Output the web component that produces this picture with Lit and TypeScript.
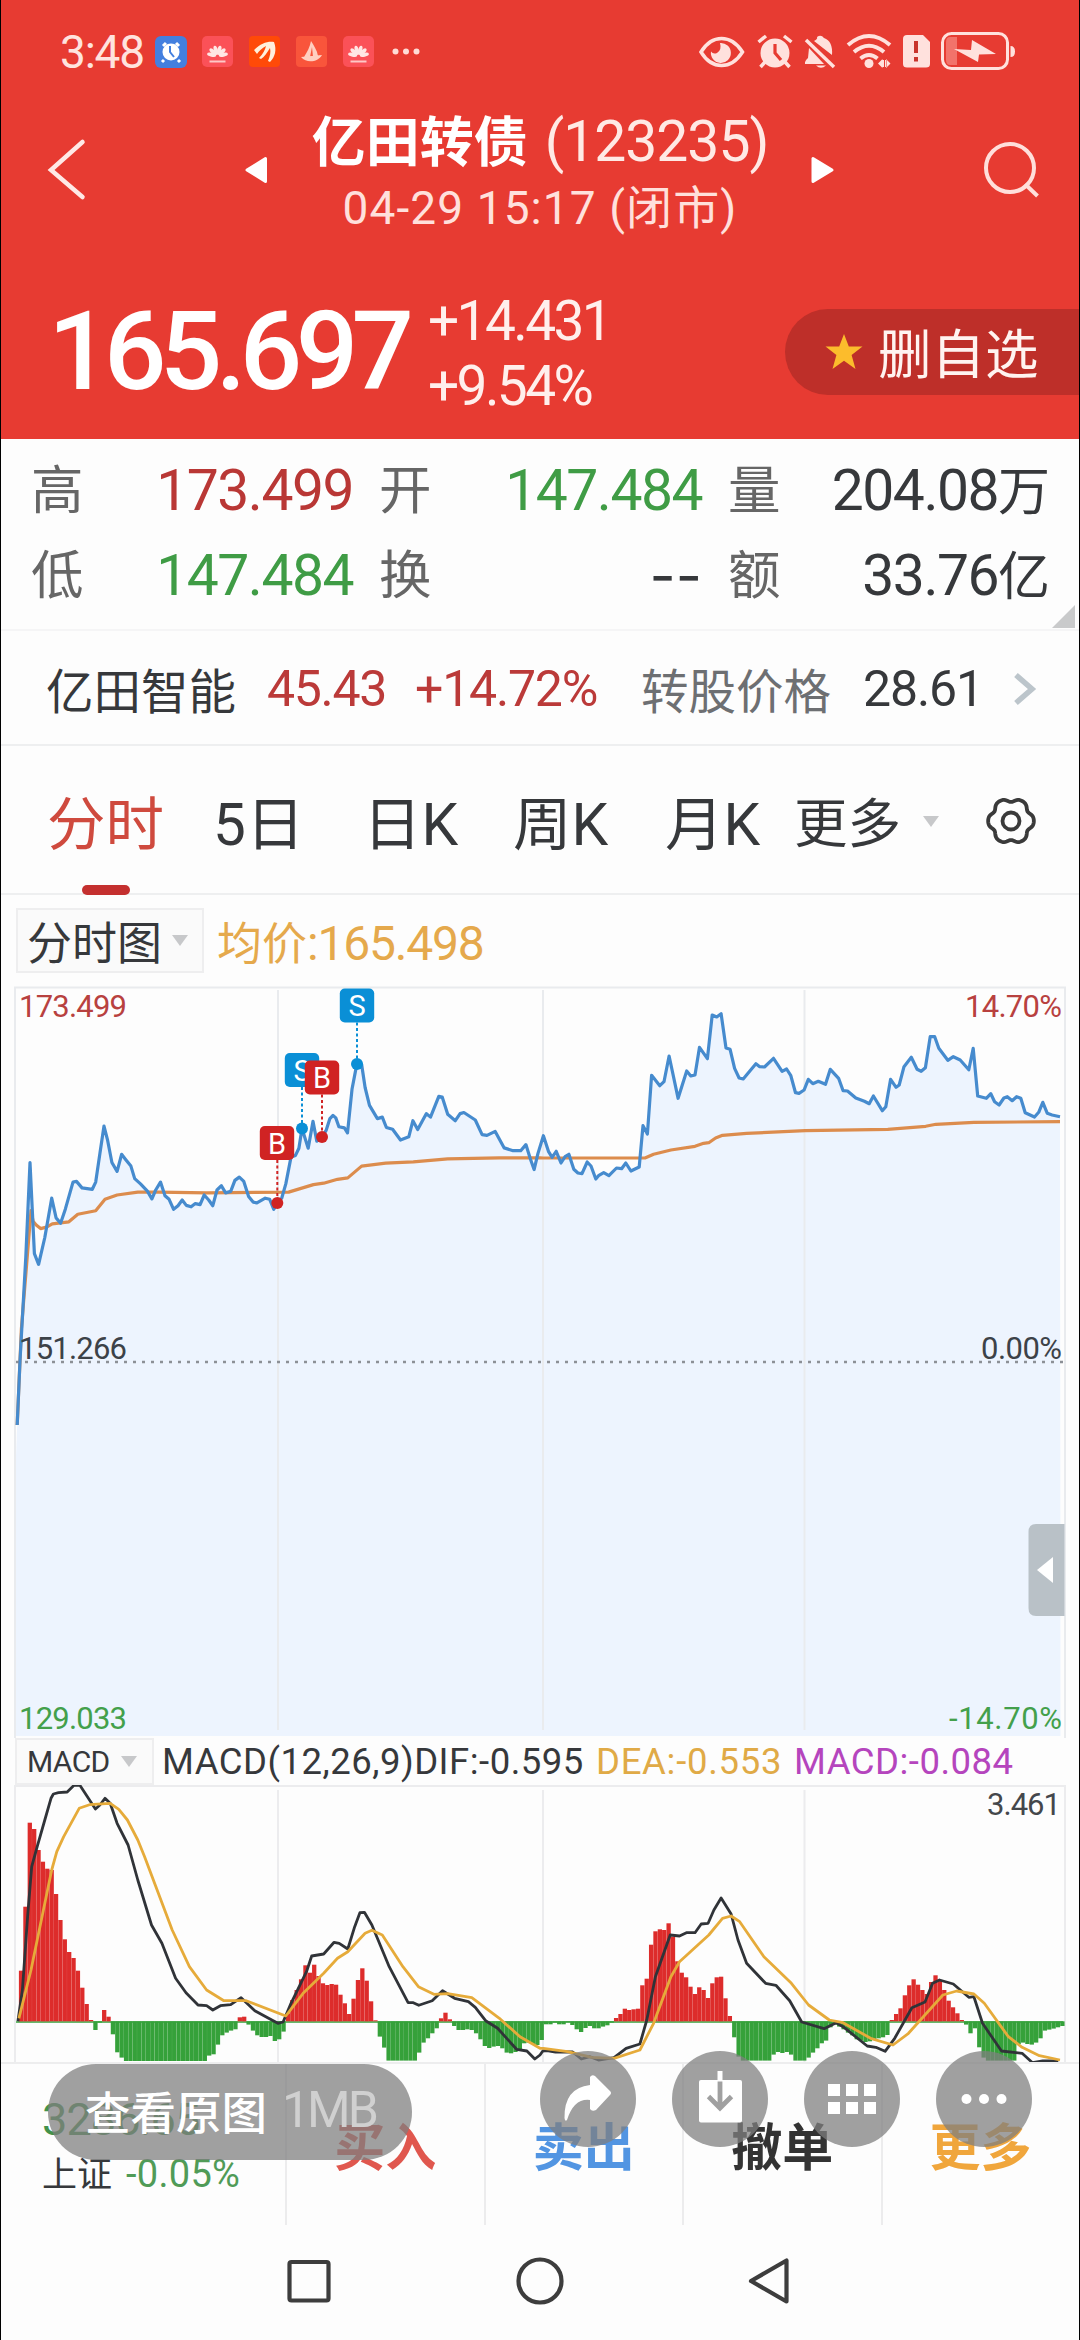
import { LitElement, html, svg, css } from "lit";
import { customElement, property } from "lit/decorators.js";

type Pt = [number, number];

/** Parses "x,y x,y ..." samples and maps them from their grid to page pixels. */
const series = (src: string, ox: number, oy: number, sx: number, sy: number): Pt[] =>
  src.trim().split(/\s+/).map((p) => {
    const [x, y] = p.split(",").map(Number);
    return [ox + x / sx, oy + y / sy] as Pt;
  });

const line = (pts: Pt[]) => pts.map(([x, y], i) => `${i ? "L" : "M"}${x.toFixed(1)} ${y.toFixed(1)}`).join("");

const GX = 2.9037;

const PRICE: Pt[] = [
  ...series(
    `50,1470 58,1290 75,1000 87,735 100,990 112,1020 130,945 150,835 163,890 176,905 190,865 212,790 222,788 238,806 268,810
    278,790 290,710 302,633 312,670 325,735 340,760 353,712 366,728 380,745 391,780 408,795 428,815 441,837 452,812 466,790
    479,828 491,838 504,866 517,856 529,840 541,855 555,859 567,850 581,853 593,826 606,840 618,856 630,812 643,800 655,820
    670,816 682,785 695,776 708,788 722,830 735,846 746,848 770,835 783,838 795,866 805,848 818,835 830,795 845,720 858,715
    868,695 877,640 895,695 909,620 920,675 934,665 947,645 958,612 967,603 975,610 984,635 1000,638 1009,652 1022,530
    1034,470 1037,455 1050,460 1060,525 1073,575 1096,612 1110,608 1122,637 1140,642 1163,672 1187,663 1199,618 1213,643
    1238,598 1250,608 1274,550 1284,552 1300,600 1322,618 1336,598 1347,595 1380,616 1400,657 1414,659 1438,648 1464,694
    1490,702 1512,702 1527,685 1540,725 1551,755 1562,710`,
    0, 900, GX, 2.8),
  ...series(
    `10,497 25,545 35,562 47,544 61,579 73,560 84,553 98,598 110,609 122,611 137,576 148,588 162,627 170,617 185,608 200,617
    222,594 237,596 249,579 264,603 288,591 299,467 312,492 324,316 348,347 360,335 375,258 401,385 426,303 438,318 450,315
    463,232 486,266 500,135 513,141 526,131 540,234 552,238 565,295 578,324 590,327 627,281 638,290 652,291 678,265 703,304
    716,297 728,316 742,368 752,370 767,360 779,328 792,341 808,334 829,343 843,298 867,325 880,362 893,363 917,384 942,394
    956,401 968,378 994,422 1004,410 1018,328 1034,352 1043,345 1057,290 1078,262 1095,298 1107,304 1119,293 1133,200
    1146,200 1158,235 1184,271 1200,260 1220,270 1245,299 1258,235 1271,378 1296,385 1309,371 1320,395 1333,405 1347,384
    1357,380 1371,392 1384,380 1396,385 1409,428 1436,441 1448,427 1460,397 1473,430 1487,435 1510,440`,
    540, 970, GX, 3),
];

const AVERAGE: Pt[] = [
  ...series(
    `50,1470 62,1200 90,870 96,900 105,910 118,920 135,916 152,907 200,901 226,880 278,870 305,838 340,826 400,818 460,818
    600,820 838,818 910,797 940,793 980,782 1010,778 1050,745 1120,737 1200,733 1300,725 1450,722 1568,722`,
    0, 900, GX, 2.8),
  ...series(
    `10,564 305,564 330,553 380,540 450,529 475,520 490,518 510,504 530,496 600,490 770,482 1010,478 1120,469 1150,463
    1260,457 1510,455`,
    540, 970, GX, 3),
];

const DIF: Pt[] = [
  ...series(
    `52,994 65,900 80,680 92,530 108,470 130,390 148,325 155,312 170,308 195,306 215,286 232,286 277,357 290,345 305,325
    320,340 340,400 372,465 400,570 440,705 470,760 510,865 540,908 575,945 600,947 618,960 640,947 670,944 700,923 740,962
    780,985 807,1000 822,996 845,940 890,845 905,798 940,792 970,757 985,760 1010,777 1030,710 1045,668 1058,667 1080,705
    1130,830 1185,938 1200,938 1216,946 1255,932 1285,902 1320,925 1360,935 1380,952 1410,992 1445,1015 1500,1078 1530,1083
    1553,1107 1568,1095`,
    0, 1690, GX, 3),
  ...series(
    `8,1083 20,1082 45,1086 95,1086 120,1107 145,1100 170,1110 215,1103 250,1075 290,1062 310,990 335,860 378,735 405,738
    425,728 450,728 468,702 488,700 505,660 526,624 555,672 575,750 600,820 655,880 685,886 725,932 760,996 825,1016
    860,998 880,1010 950,1068 975,1072 1002,1084 1030,1045 1080,953 1118,936 1140,880 1160,870 1200,882 1245,922 1260,920
    1285,1000 1340,1083 1400,1090 1430,1118 1460,1113 1505,1113`,
    540, 1690, GX, 3),
];

const DEA: Pt[] = [
  ...series(
    `55,985 90,840 150,540 165,485 185,440 230,355 260,344 320,340 345,358 370,390 400,450 420,500 500,720 550,830 600,900
    650,932 715,932 830,978 880,910 940,850 980,805 1010,785 1060,730 1080,721 1110,735 1170,830 1215,890 1260,913 1300,911
    1370,923 1450,985 1510,1040 1568,1075`,
    0, 1690, GX, 3),
  ...series(
    `10,1075 80,1085 150,1102 215,1105 290,1080 330,1000 380,860 405,815 490,735 530,685 555,678 580,695 650,800 730,880
    780,945 840,990 880,998 960,1045 1025,1065 1070,1030 1170,915 1210,903 1260,912 1290,940 1360,1040 1400,1072 1450,1097
    1510,1110`,
    540, 1690, GX, 3),
];

const ZERO = 994;
const rep = (v: number, n: number) => Array<number>(n).fill(v);
const HISTOGRAM: number[] = [
  842, 650, 398, 417, 480, 515, 536, 540, 612, 690, 748, 786, 804, 842, 893, 942, 990, 1020, 998, 960, 980, 1033, 1087, 1103,
  ...rep(1113, 19), 1097, 1093, 1064, 1036, 1028, 1022, 1018, 982, 980, 1004, 1022, 1036, 1041, 1041, 1038, 1053, 1048, 1025,
  970, 930, 900, 868, 826, 848, 824, 858, 880, 885, 882, 884, 914, 940, 972, 926, 870, 835, 872, 934, 991, 1040, 1073,
  ...rep(1112, 7), 1088, 1058, 1045, 1030, 1015, 985, 968, 988, 1008, 1020, 1020, 1018, 1020, 1030, 1048, 1068, 1074, 1070,
  1068, 1075, 1088, 1090, 1086, 1078, 1060, 1058, 1062, 1065, 1050, 1003, 1003, 998, 1003, 1003, 997, 1005, 1018, 1026, 1014,
  1008, 1015, 1015, 1010, 1006, 998, 984, 972, 956, 960, 958, 956, 886, 866, 764, 724, 718, 720, 700, 740, 814, 848, 862, 890,
  912, 892, 900, 924, 880, 862, 860, 925, 978, 1042, 1100, ...rep(1112, 7), 1094, 1086, 1089, 1086, 1094, 1112, 1112, 1112,
  1103, 1088, 1075, 1060, 1052, 1012, 1004, 1010, 1018, 1028, 1036, 1048, 1052, 1056, 1054, 1050, 1045, 1042, 1035, 990, 972,
  955, 916, 886, 868, 884, 900, 912, 876, 856, 872, 900, 932, 952, 970, 990, 1004, 1030, 1015, 1072, 1103, ...rep(1112, 7),
  1062, 1058, 1062, 1064, 1058, 1045, 1022, 1019, 1016, 1012, 1008,
].slice(0, 239);

const gearPath = (cx: number, cy: number) => {
  let d = "";
  for (let a = 0; a < 360; a += 3) {
    const t = (a * Math.PI) / 180;
    const c = Math.cos(6 * t);
    const r = 21.3 + 1.9 * c - 0.35 * Math.cos(12 * t);
    d += `${a ? "L" : "M"}${(cx + r * Math.cos(t)).toFixed(2)} ${(cy + r * Math.sin(t)).toFixed(2)}`;
  }
  return d + "Z";
};

@customElement("price-chart")
export class PriceChart extends LitElement {
  static styles = css`
    :host { display: block; }
    svg { display: block; }
    text { font-family: Roboto, "Noto Sans CJK SC", sans-serif; font-size: 31px; }
    .grid { fill: none; stroke: #e9ebee; stroke-width: 2; }
    .area { fill: #edf4fe; }
    .price { fill: none; stroke: #468bce; stroke-width: 3.2; stroke-linejoin: round; }
    .avg { fill: none; stroke: #dc8c4d; stroke-width: 3.2; stroke-linejoin: round; }
    .zero { stroke: #8c9096; stroke-width: 2.6; stroke-dasharray: 3 6; }
    .up { fill: #b8413f; }
    .down { fill: #43a04b; }
    .mid { fill: #3c4248; }
    .stem { stroke-width: 2; stroke-dasharray: 3 2.5; }
    .tag { fill: #fff; font-size: 29px; text-anchor: middle; }
  `;

  private marker(letter: string, cx: number, top: number, dot: Pt) {
    const color = letter === "S" ? "#0a8fd6" : "#d02323";
    return svg`
      <line class="stem" stroke=${color} x1=${dot[0]} x2=${dot[0]} y1=${top + 34} y2=${dot[1]}></line>
      <circle fill=${color} cx=${dot[0]} cy=${dot[1]} r="6"></circle>
      <rect fill=${color} x=${cx - 17.2} y=${top} width="34.4" height="34" rx="5"></rect>
      <text class="tag" x=${cx} y=${top + 27.5}>${letter}</text>`;
  }

  render() {
    const path = line(PRICE);
    return html`
      <svg width="1078" height="752" viewBox="1 986 1078 752">
        <path class="area" d="${path}L1060.5 1736H15.5V1470Z"></path>
        <path class="grid" d="M15 1738V987.500H1065V1738M278 990V1730M543 990V1730M804.500 990V1730"></path>
        <line class="zero" x1="16" x2="1064" y1="1362" y2="1362"></line>
        <path class="avg" d=${line(AVERAGE)}></path>
        <path class="price" d=${path}></path>
        <text class="up" x="19" y="1017" textLength="108">173.499</text>
        <text class="mid" x="19" y="1359" textLength="108">151.266</text>
        <text class="down" x="19" y="1729" textLength="108">129.033</text>
        <text class="up" x="965" y="1017" textLength="97">14.70%</text>
        <text class="mid" x="981" y="1359" textLength="81">0.00%</text>
        <text class="down" x="949" y="1729" textLength="113">-14.70%</text>
        ${this.marker("B", 277, 1126, [277.3, 1203])}
        ${this.marker("S", 302, 1053, [302, 1128.5])}
        ${this.marker("B", 322, 1060.5, [322, 1137])}
        ${this.marker("S", 357, 988.5, [357, 1064])}
        <path fill="#b9c1c7" d="M1064.500 1524H1036Q1028.500 1524 1028.500 1532V1608Q1028.500 1616 1036 1616H1064.500Z"></path>
        <path fill="#fff" d="M1037 1570L1053 1557V1583Z"></path>
      </svg>`;
  }
}

@customElement("macd-chart")
export class MacdChart extends LitElement {
  static styles = css`
    :host { display: block; }
    svg { display: block; }
    text { font-family: Roboto, sans-serif; font-size: 31px; fill: #44474b; }
    .grid { fill: none; stroke: #ececee; stroke-width: 2; }
    .dif { fill: none; stroke: #303338; stroke-width: 2.8; stroke-linejoin: round; }
    .dea { fill: none; stroke: #e6ab3a; stroke-width: 2.8; stroke-linejoin: round; }
    .pos { fill: #dd2c2b; }
    .neg { fill: #35a13a; }
  `;

  render() {
    const step = 12.705 / GX;
    return html`
      <svg width="1078" height="277" viewBox="1 1785 1078 277">
        <path class="grid" d="M15 2062V1786H1065V2062M278 1790V2062M543 1790V2062M804.500 1790V2062"></path>
        <path stroke="#35a13a" stroke-width="1.500" d="M16 2022H1063"></path>
        ${HISTOGRAM.map((v, i) => {
          const h = Math.abs(v - ZERO) / 3;
          const zero = 1690 + ZERO / 3;
          return svg`<rect class=${v < ZERO ? "pos" : "neg"} x=${(18.9 + i * step).toFixed(2)}
            y=${(v < ZERO ? zero - h : zero).toFixed(1)} width="4.300" height=${h.toFixed(1)}></rect>`;
        })}
        <path class="dif" d=${line(DIF)}></path>
        <path class="dea" d=${line(DEA)}></path>
        <text x="987" y="1815" textLength="74">3.461</text>
      </svg>`;
  }
}

@customElement("stat-cell")
export class StatCell extends LitElement {
  @property() label = "";
  @property() value = "";
  @property() tone = "ink";
  static styles = css`
    :host { display: flex; justify-content: space-between; align-items: center; }
    .label { font-size: 52.5px; line-height: 85px; color: #666; }
    .value { font-size: 57px; line-height: 85px; letter-spacing: -1.5px; }
    .unit { font-size: 52px; letter-spacing: 0; }
    .ink { color: #36383b; }
    .up { color: #b93735; }
    .down { color: #3f9c45; }
    .none { color: #36383b; font-family: Inter, sans-serif; letter-spacing: 0; }
  `;
  render() {
    const unit = /[万亿]$/.test(this.value) ? this.value.slice(-1) : "";
    const number = unit ? this.value.slice(0, -1) : this.value;
    return html`<span class="label">${this.label}</span>
      <span class="value ${this.tone}">${number}<span class="unit">${unit}</span></span>`;
  }
}

@customElement("app-root")
export class AppRoot extends LitElement {
  static styles = css`
    :host {
      display: block; width: 1080px; height: 2340px; position: relative; overflow: hidden; box-sizing: border-box;
      background: #fdfdfd; border-left: 1px solid #000; border-right: 1px solid #000;
      font-family: Roboto, "Noto Sans CJK SC", sans-serif; color: #36383b; white-space: nowrap;
    }
    svg { display: block; flex: none; }
    .page { display: flex; flex-direction: column; height: 2340px; }
    .header { height: 439px; background: #e73b32; color: #fff3f0; display: flex; flex-direction: column; }
    .status { height: 103px; display: flex; justify-content: space-between; }
    .clock { font-size: 46px; line-height: 104px; letter-spacing: -1.2px; padding-left: 59px; width: 91px; color: #ffe3de; }
    .status-left { display: flex; }
    .titlebar { height: 134px; display: flex; align-items: flex-start; justify-content: space-between; }
    .titles { display: flex; flex-direction: column; align-items: center; width: 460px; }
    .name { display: flex; align-items: center; height: 76px; font-size: 57px; letter-spacing: -1px; color: #ffe9e5; }
    .name b { font-size: 54px; font-weight: 700; letter-spacing: 0; color: #fff; margin: -5px 17px 0 0; }
    .time { font-size: 46px; line-height: 58px; letter-spacing: 1.1px; color: #ffe0dc; }
    .quote { display: flex; align-items: flex-start; height: 202px; justify-content: space-between; }
    .figures { display: flex; padding-left: 47px; }
    .price { font-size: 110px; font-weight: 500; line-height: 110px; letter-spacing: -6.6px; padding-top: 60px; width: 380px; color: #fff; }
    .change { font-size: 55px; line-height: 65px; letter-spacing: -2.6px; padding-top: 52px; color: #ffefec; }
    .fav { margin-top: 72px; width: 294px; height: 86px; border-radius: 43px 0 0 43px; background: #be2f29;
      display: flex; align-items: center; gap: 14px; box-sizing: border-box; padding-left: 39px; font-size: 53.5px; }
    .fav span { margin-top: -4px; }
    .stats { height: 192px; box-sizing: border-box; padding: 10px 31px 0 30px; border-bottom: 2px solid #f5f5f6;
      display: grid; grid-template-columns: 322px 323px 322px; column-gap: 26px; grid-auto-rows: 85px; position: relative; }
    .corner { position: absolute; right: 4px; bottom: 1px; }
    .stock { height: 116px; box-sizing: border-box; border-bottom: 2px solid #eeeff0; display: flex; align-items: center;
      font-size: 50px; padding: 3px 0 0 45px; }
    .stock .cn { font-size: 47.5px; width: 221px; }
    .stock .last { width: 148px; color: #bb3a39; letter-spacing: -1.3px; }
    .stock .pct { width: 226px; color: #bb3a39; letter-spacing: -1.2px; }
    .stock .gray { color: #6d6f72; width: 222px; }
    .stock .conv { width: 149px; letter-spacing: -1.1px; }
    .tabs { height: 149px; box-sizing: border-box; border-bottom: 2px solid #eeeff0; display: flex; font-size: 58.5px; line-height: 158px; }
    .active { width: 166px; padding-left: 46px; color: #cf4a3e; display: flex; flex-direction: column; height: 149px; }
    .active::after { content: ""; width: 48px; height: 10px; border-radius: 5px; background: #c4302f; margin: -19px 0 0 35px; }
    .day5 { width: 150px; } .dayk { width: 150px; } .weekk { width: 152px; } .monthk { width: 129px; }
    .more { width: 129px; font-size: 53.5px; }
    .down-arrow { width: 0; height: 0; border: 8px solid transparent; border-top: 11px solid #c7c8ca; border-bottom: 0; align-self: center; }
    .tabs .down-arrow { margin-top: 4px; }
    .gear { margin: 47px 0 0 44px; }
    .chart-head { height: 91px; display: flex; align-items: center; padding-left: 15px; gap: 13px; box-sizing: border-box; }
    .select { display: flex; align-items: center; box-sizing: border-box; border: 2px solid #eeeeef; background: #fafafa; }
    .type { width: 188px; height: 65px; padding-left: 9px; gap: 10px; font-size: 45px; }
    .avg { color: #e5a94c; font-size: 48px; letter-spacing: -1.2px; }
    .avg span { font-size: 45px; letter-spacing: 0; }
    .macd-head { height: 47px; display: flex; align-items: center; padding-left: 14px; font-size: 36.5px; line-height: 51px; }
    .ind { width: 139px; height: 47px; padding-left: 10px; gap: 11px; font-size: 30px; letter-spacing: -0.6px; line-height: 47px; }
    .params { width: 434px; padding-left: 8px; letter-spacing: 0.5px; }
    .dea { width: 198px; color: #e0aa46; letter-spacing: 0.7px; }
    .macd { color: #b545bd; letter-spacing: 0.5px; }
    .trade { height: 163px; box-sizing: border-box; border-top: 2px solid #ededee; display: flex; }
    .index { width: 286px; box-sizing: border-box; border-right: 2px solid #ececed; padding: 31px 0 0 41px; }
    .points { font-size: 45px; line-height: 50px; color: #43924b; letter-spacing: -0.9px; }
    .sub { display: flex; align-items: baseline; gap: 14px; font-size: 35px; line-height: 58px; }
    .sub span { color: #509b57; font-size: 38px; letter-spacing: 0.3px; }
    .act { width: 198.500px; box-sizing: border-box; border-right: 2px solid #ececed; font-size: 51px; font-weight: 700;
      text-align: center; line-height: 170px; }
    .act:last-child { border-right: 0; width: 196px; }
    .buy { color: #e0574e; } .sell { color: #5295e2; } .cancel { color: #333; } .others { color: #f0a63c; }
    .nav { height: 115px; }
    .pill { position: absolute; left: 47px; top: 2064px; width: 364px; height: 96px; border-radius: 48px; box-sizing: border-box;
      background: rgba(127, 127, 127, 0.74); display: flex; align-items: center; padding: 0 0 5px 37px; gap: 15px;
      font-size: 45.500px; font-weight: 500; color: #fff; }
    .pill span { font-size: 50px; font-weight: 400; color: #d0d0d0; letter-spacing: -3px; }
    .tools { position: absolute; left: 539px; top: 2051px; display: flex; gap: 36px; }
  `;

  private statusLeft() {
    const petals = (x: number) => svg`
      <rect x=${x} y="36" width="31" height="31" rx="5" fill="#fb5158"></rect>
      <g fill="#ffe6e4" transform="translate(${x + 15.5} 56)">
        ${[-78, -47, -16, 16, 47, 78].map((a) => svg`<ellipse cx="0" cy="-6" rx="2" ry="4.600" transform="rotate(${a})"></ellipse>`)}
        <rect x="-8" y="4.500" width="16" height="2" opacity=".8"></rect>
      </g>`;
    return html`<svg width="270" height="103" viewBox="151 0 270 103">
      <rect x="155" y="36" width="32" height="32" rx="6" fill="#437fdf"></rect>
      <circle cx="171" cy="52" r="8.500" fill="#fff"></circle>
      <path d="M163 46L166 43M179 46L176 43M164 60L162 62M178 60L180 62" stroke="#fff" stroke-width="3"></path>
      <path d="M170 46V52L174 57" fill="none" stroke="#437fdf" stroke-width="2"></path>
      ${petals(202)}
      <rect x="249" y="36" width="31" height="31" rx="4" fill="#ff4a08"></rect>
      <path fill="#fff1dc" d="M254 50C261 43 268 41 274 42C277 50 275 57 270 62L268 61C270 56 271 52 270 48C267 53 264 57 261 59L259 58C263 54 265 50 266 46C262 48 259 51 257 54Z"></path>
      <rect x="296" y="36" width="31" height="31" rx="4" fill="#f9553b"></rect>
      <path fill="#ffcfc0" d="M311 41C314 46 317 50 318 56L313 57L312 47L310 57H304C307 52 310 47 311 41ZM301 57L322 55C318 62 307 64 301 57Z"></path>
      ${petals(343)}
      <g fill="#ffdcd6"><circle cx="395.500" cy="51.500" r="3"></circle><circle cx="406" cy="51.500" r="3"></circle><circle cx="416.500" cy="51.500" r="3"></circle></g>
    </svg>`;
  }

  private statusRight() {
    const c = "#ffe1dd";
    return html`<svg width="390" height="103" viewBox="689 0 390 103">
      <path d="M701 52C712 34 731 34 742.500 52C731 70 712 70 701 52Z" fill="none" stroke=${c} stroke-width="3.500"></path>
      <path fill=${c} d="M720 43A10 10 0 1 1 711 51.500Q713 54.500 717 53Q722 50 720 43Z"></path>
      <circle cx="775" cy="53" r="14.500" fill=${c}></circle>
      <path d="M758.500 42L766 36M791.500 42L784 36M765 62L760.500 67M785 62L789.500 67" stroke=${c} stroke-width="3.500"></path>
      <path d="M775 44V53L781 60" fill="none" stroke="#e73b32" stroke-width="3.200"></path>
      <path fill=${c} d="M809 48L824 64H805Q804.500 61 808 58ZM814 41Q818 39 817 37Q821 34 824 38Q833 41 832 55ZM816 65.500H826Q821 70 816 65.500Z"></path>
      <path d="M806 40L834 67" stroke=${c} stroke-width="3.500"></path>
      <g fill="none" stroke=${c} stroke-width="4"><path d="M848 45Q869 27 890 45"></path><path d="M854 52Q869 39.500 884 52"></path><path d="M860.500 58.500Q869 51.500 877.500 58.500"></path></g>
      <circle cx="869" cy="63.500" r="4.500" fill=${c}></circle>
      <path fill=${c} d="M878 63.500L882.500 59V68ZM890.500 63.500L886 59V68ZM882.500 60H884V67H882.500ZM885 60H886.500V67H885Z"></path>
      <path fill=${c} d="M907 35H923L930 42V64Q930 67.500 926 67.500H907Q903 67.500 903 64V39Q903 35 907 35Z"></path>
      <path d="M916 41V53M916 57V61.500" stroke="#c9342c" stroke-width="4"></path>
      <rect x="942.500" y="33.500" width="65" height="35" rx="9" fill="none" stroke=${c} stroke-width="3"></rect>
      <path d="M957 37H950Q946 37 946 42V60Q946 65 950 65H957Z" fill="#f2736b"></path>
      <path fill=${c} d="M954 49L971 50L972 40L996 54L979 54.500L978 62ZM1010.500 46Q1015 46 1015 51.500Q1015 57 1010.500 57Z"></path>
    </svg>`;
  }

  render() {
    return html`
      <div class="page">
        <div class="header">
          <div class="status">
            <div class="status-left"><span class="clock">3:48</span>${this.statusLeft()}</div>
            ${this.statusRight()}
          </div>
          <div class="titlebar">
            <svg width="309" height="134" viewBox="1 103 309 134">
              <path d="M82.500 142L51 170L82.500 197" fill="none" stroke="#ffe9e6" stroke-width="4.500" stroke-linecap="round"></path>
              <path d="M247 170L265.500 158.500V181.500Z" fill="#fff" stroke="#fff" stroke-width="3" stroke-linejoin="round"></path>
            </svg>
            <div class="titles">
              <div class="name"><b>亿田转债</b>(123235)</div>
              <div class="time">04-29 15:17 (闭市)</div>
            </div>
            <svg width="309" height="134" viewBox="770 103 309 134">
              <path d="M832 170L813 158.500V181.500Z" fill="#fff" stroke="#fff" stroke-width="3" stroke-linejoin="round"></path>
              <g fill="none" stroke="#ffdfdb" stroke-width="4"><circle cx="1010" cy="168" r="24"></circle><path d="M1025 184L1037.500 196"></path></g>
            </svg>
          </div>
          <div class="quote">
            <div class="figures">
              <div class="price">165.697</div>
              <div class="change">+14.431<br />+9.54%</div>
            </div>
            <div class="fav">
              <svg width="40" height="40" viewBox="0 0 40 40"><path fill="#fcbc2c" d="M20 2L24.800 14.600H38.500L27.600 23L31.500 37L20 28.800L8.500 37L12.400 23L1.500 14.600H15.200Z"></path></svg>
              <span>删自选</span>
            </div>
          </div>
        </div>

        <div class="stats">
          <stat-cell label="高" value="173.499" tone="up"></stat-cell>
          <stat-cell label="开" value="147.484" tone="down"></stat-cell>
          <stat-cell label="量" value="204.08万"></stat-cell>
          <stat-cell label="低" value="147.484" tone="down"></stat-cell>
          <stat-cell label="换" value="--" tone="none"></stat-cell>
          <stat-cell label="额" value="33.76亿"></stat-cell>
          <svg class="corner" width="23" height="23" viewBox="0 0 23 23"><path fill="#c9cacb" d="M23 0V23H0Z"></path></svg>
        </div>

        <div class="stock">
          <span class="cn">亿田智能</span><span class="last">45.43</span><span class="pct">+14.72%</span>
          <span class="cn gray">转股价格</span><span class="conv">28.61</span>
          <svg width="26" height="36" viewBox="0 0 26 36"><path d="M4 4L20 18L4 32" fill="none" stroke="#bcc5cb" stroke-width="5.500"></path></svg>
        </div>

        <div class="tabs">
          <div class="active">分时</div>
          <div class="day5">5日</div><div class="dayk">日K</div><div class="weekk">周K</div><div class="monthk">月K</div>
          <div class="more">更多</div><i class="down-arrow"></i>
          <svg class="gear" width="56" height="56" viewBox="-28 -28 56 56">
            <g fill="none" stroke="#3a3a3a" stroke-width="3.800"><path d=${gearPath(0, 0)}></path><circle r="8.500"></circle></g>
          </svg>
        </div>

        <div class="chart-head">
          <div class="select type">分时图<i class="down-arrow"></i></div>
          <div class="avg"><span>均价</span>:165.498</div>
        </div>
        <price-chart></price-chart>
        <div class="macd-head">
          <div class="select ind">MACD<i class="down-arrow"></i></div>
          <div class="params">MACD(12,26,9)DIF:-0.595</div>
          <div class="dea">DEA:-0.553</div>
          <div class="macd">MACD:-0.084</div>
        </div>
        <macd-chart></macd-chart>

        <div class="trade">
          <div class="index">
            <div class="points">3286.65</div>
            <div class="sub">上证<span>-0.05%</span></div>
          </div>
          <div class="act buy">买入</div><div class="act sell">卖出</div><div class="act cancel">撤单</div><div class="act others">更多</div>
        </div>
        <svg class="nav" width="1078" height="115" viewBox="1 2225 1078 115">
          <g fill="none" stroke="#3d3d3d" stroke-width="4.200" stroke-linejoin="round">
            <rect x="289.500" y="2262" width="39" height="38.500" rx="2"></rect>
            <circle cx="540" cy="2281" r="21.500"></circle>
            <path d="M751 2281L786.500 2260.500V2301.500Z"></path>
          </g>
        </svg>
      </div>

      <div class="pill">查看原图<span>1MB</span></div>
      <div class="tools">
        <svg width="96" height="96" viewBox="0 0 96 96">
          <circle cx="48" cy="48" r="48" fill="#7f7f7f" fill-opacity=".74"></circle>
          <path fill="#fff" d="M50 26Q52 23 55 25L70 40Q72 42 70 44L56 59Q52 61 50 58V49Q34 47 27 69Q25 71 24.500 67Q24 37 50 34Z"></path>
        </svg>
        <svg width="96" height="96" viewBox="0 0 96 96">
          <circle cx="48" cy="48" r="48" fill="#7f7f7f" fill-opacity=".74"></circle>
          <rect x="27" y="29" width="43" height="42.500" rx="2" fill="#fff"></rect>
          <path d="M48 20V30" stroke="#fff" stroke-width="5"></path>
          <path d="M48 30.500V57M36.500 45.500L48 57L59.500 45.500" fill="none" stroke="#a0a0a0" stroke-width="4.800"></path>
        </svg>
        <svg width="96" height="96" viewBox="0 0 96 96">
          <circle cx="48" cy="48" r="48" fill="#7f7f7f" fill-opacity=".74"></circle>
          <path fill="#fff" d="M24 33H36V45H24ZM42 33H54V45H42ZM60 33H72V45H60ZM24 51H36V63H24ZM42 51H54V63H42ZM60 51H72V63H60Z"></path>
        </svg>
        <svg width="96" height="96" viewBox="0 0 96 96">
          <circle cx="48" cy="48" r="48" fill="#7f7f7f" fill-opacity=".74"></circle>
          <g fill="#fff"><circle cx="30.500" cy="48" r="5"></circle><circle cx="48" cy="48" r="5"></circle><circle cx="65.500" cy="48" r="5"></circle></g>
        </svg>
      </div>
    `;
  }
}
